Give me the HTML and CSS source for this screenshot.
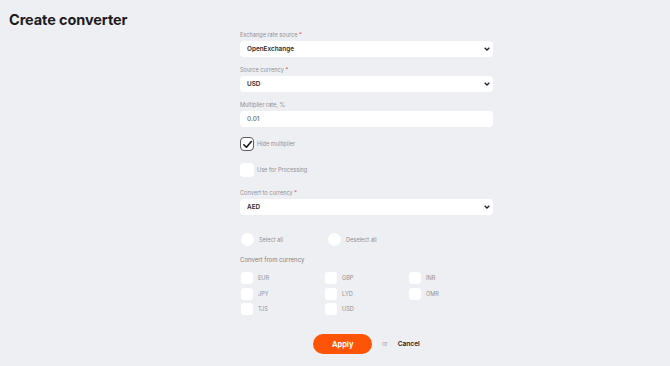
FILE: index.html
```html
<!DOCTYPE html>
<html>
<head>
<meta charset="utf-8">
<link rel="stylesheet" href="styles.css">
</head>
<body>
<div class="page">
  <h1 class="title">Create converter</h1>
  <form class="form">
    <div class="field">
      <label class="label">Exchange rate source <span class="req">*</span></label>
      <div class="select-wrap">
        <select class="control select"><option>OpenExchange</option></select>
        <svg class="chev" viewBox="0 0 6 4" width="6" height="4"><path d="M0.7 0.7 L3 3 L5.3 0.7" fill="none" stroke="#222" stroke-width="1.3"/></svg>
      </div>
    </div>
    <div class="field">
      <label class="label">Source currency <span class="req">*</span></label>
      <div class="select-wrap">
        <select class="control select"><option>USD</option></select>
        <svg class="chev" viewBox="0 0 6 4" width="6" height="4"><path d="M0.7 0.7 L3 3 L5.3 0.7" fill="none" stroke="#222" stroke-width="1.3"/></svg>
      </div>
    </div>
    <div class="field">
      <label class="label">Multiplier rate, %</label>
      <input class="control input" value="0.01">
    </div>
    <div class="check-row first">
      <span class="box checked"><svg viewBox="0 0 12 12" width="11" height="11"><path d="M2 6.2 L4.8 9 L10.2 2.8" fill="none" stroke="#111" stroke-width="1.7" stroke-linecap="round" stroke-linejoin="round"/></svg></span>
      <span class="check-text">Hide multiplier</span>
    </div>
    <div class="check-row second">
      <span class="box"></span>
      <span class="check-text">Use for Processing</span>
    </div>
    <div class="field convert-to">
      <label class="label">Convert to currency <span class="req">*</span></label>
      <div class="select-wrap">
        <select class="control select"><option>AED</option></select>
        <svg class="chev" viewBox="0 0 6 4" width="6" height="4"><path d="M0.7 0.7 L3 3 L5.3 0.7" fill="none" stroke="#222" stroke-width="1.3"/></svg>
      </div>
    </div>
    <div class="radio-row">
      <div class="radio-item"><span class="circle"></span><span class="check-text">Select all</span></div>
      <div class="radio-item"><span class="circle"></span><span class="check-text">Deselect all</span></div>
    </div>
    <div class="from-label">Convert from currency</div>
    <div class="cur-grid">
      <div class="cur"><span class="cbox"></span><span class="cur-text">EUR</span></div>
      <div class="cur"><span class="cbox"></span><span class="cur-text">GBP</span></div>
      <div class="cur"><span class="cbox"></span><span class="cur-text">INR</span></div>
      <div class="cur"><span class="cbox"></span><span class="cur-text">JPY</span></div>
      <div class="cur"><span class="cbox"></span><span class="cur-text">LYD</span></div>
      <div class="cur"><span class="cbox"></span><span class="cur-text">OMR</span></div>
      <div class="cur"><span class="cbox"></span><span class="cur-text">TJS</span></div>
      <div class="cur"><span class="cbox"></span><span class="cur-text">USD</span></div>
    </div>
    <div class="actions">
      <button type="button" class="apply">Apply</button>
      <span class="or">or</span>
      <a class="cancel">Cancel</a>
    </div>
  </form>
</div>
</body>
</html>
```
FILE: styles.css
```css
html, body {
  margin: 0;
  padding: 0;
  background: #eeeff3;
  font-family: "Inter", "Open Sans", sans-serif;
  color: #222;
}
.page {
  position: relative;
  width: 670px;
  height: 366px;
  overflow: hidden;
}
.title {
  margin: 0;
  position: absolute;
  left: 9px;
  top: 10px;
  font-size: 14.5px;
  line-height: 20px;
  font-weight: 700;
  color: #1c1c1e;
  letter-spacing: -0.1px;
}
.form {
  margin: 0 0 0 240px;
  padding-top: 31px;
  width: 253px;
  display: flex;
  flex-direction: column;
}
.field {
  display: flex;
  flex-direction: column;
  margin-bottom: 9px;
}
.label {
  display: block;
  font-size: 5.6px;
  line-height: 8px;
  height: 8px;
  color: #8e8f94;
  margin-bottom: 2px;
}
.req { color: #e5484d; }
.select-wrap {
  position: relative;
  height: 16px;
}
.control {
  display: block;
  box-sizing: border-box;
  width: 253px;
  height: 16px;
  margin: 0;
  border: none;
  border-radius: 4px;
  background: #fff;
  font-family: inherit;
  padding: 0 0 0 7px;
  outline: none;
}
.select {
  -webkit-appearance: none;
  appearance: none;
  font-size: 6.4px;
  font-weight: 600;
  color: #2a2a2e;
}
.chev {
  position: absolute;
  right: 3px;
  top: 6px;
}
.input {
  font-size: 6.4px;
  color: #6d6e73;
  font-weight: 500;
}
.check-row {
  display: flex;
  align-items: center;
  gap: 3px;
  height: 14px;
}
.check-row.first { margin-top: 1px; }
.check-row.second { margin-top: 12px; }
.box {
  box-sizing: border-box;
  width: 14px;
  height: 14px;
  border-radius: 4px;
  background: #fff;
  display: flex;
  align-items: center;
  justify-content: center;
}
.box.checked {
  border: 1px solid #5b5b60;
}
.check-text {
  font-size: 5.6px;
  color: #8e8f94;
}
.convert-to { margin-top: 12px; margin-bottom: 0; }
.radio-row {
  display: flex;
  margin-top: 18px;
  height: 13px;
}
.radio-item {
  display: flex;
  align-items: center;
  gap: 5px;
  width: 86px;
  padding-left: 1px;
}
.circle {
  width: 13px;
  height: 13px;
  border-radius: 50%;
  background: #fff;
}
.from-label {
  margin-top: 10px;
  font-size: 6px;
  line-height: 8px;
  color: #808186;
}
.cur-grid {
  margin-top: 8px;
  display: grid;
  grid-template-columns: 84px 84px 84px;
  row-gap: 3.5px;
}
.cur {
  display: flex;
  align-items: center;
  gap: 5px;
  padding-left: 1px;
  height: 12px;
}
.cbox {
  width: 12px;
  height: 12px;
  border-radius: 3px;
  background: #fff;
}
.cur-text {
  font-size: 5.6px;
  color: #8e8f94;
}
.actions {
  margin-top: 19px;
  display: flex;
  align-items: center;
  justify-content: center;
}
.apply {
  width: 59px;
  height: 20px;
  border: none;
  border-radius: 10px;
  background: #ff5306;
  color: #fff;
  font-family: inherit;
  font-size: 7.4px;
  font-weight: 700;
  padding: 0;
}
.or {
  margin-left: 10px;
  font-size: 5.6px;
  color: #9a9ba0;
}
.cancel {
  margin-left: 10px;
  font-size: 6.6px;
  font-weight: 600;
  color: #1e1e22;
}
```
